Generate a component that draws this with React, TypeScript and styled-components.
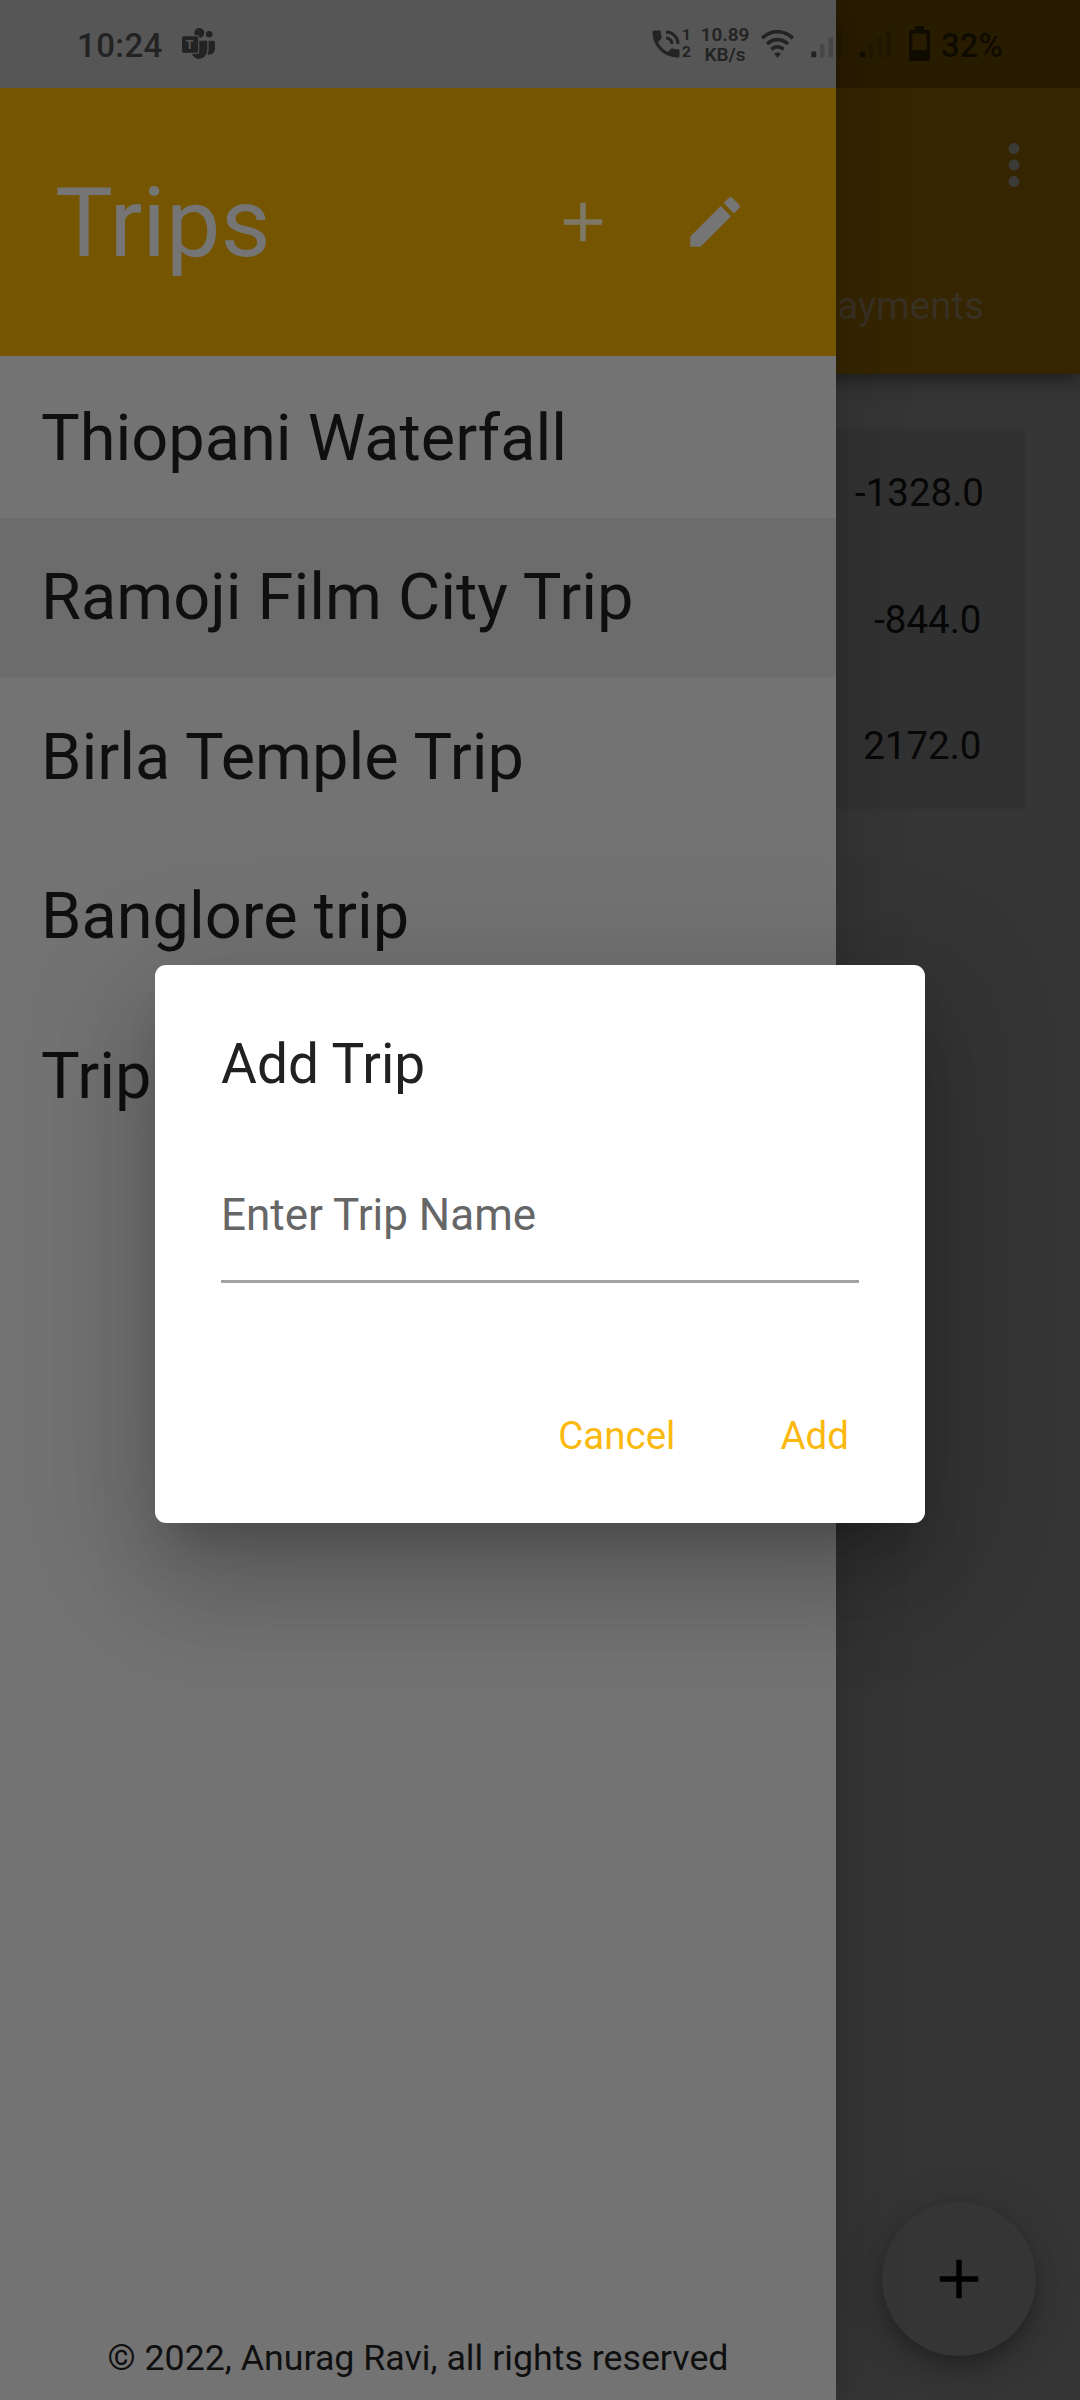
import React from "react";
import styled, { createGlobalStyle } from "styled-components";
import { MdAdd, MdEdit, MdMoreVert, MdPhoneInTalk } from "react-icons/md";

const GlobalStyle = createGlobalStyle`
  *, *::before, *::after { box-sizing: border-box; }
  body { margin: 0; background: #353535; }
  button { font: inherit; border: 0; padding: 0; background: none; }
`;

const Screen = styled.div`
  position: relative;
  width: 1080px;
  height: 2400px;
  overflow: hidden;
  background: #353535;
  font-family: Roboto, "Noto Sans", sans-serif;
`;

/* ---------- trip page, behind the drawer ---------- */

const Page = styled.main`
  display: flex;
  flex-direction: column;
  height: 100%;
`;

const AppBar = styled.header`
  display: flex;
  flex-direction: column;
  height: 374px;
  padding-top: 88px;
  background: #352501;
  box-shadow: 0 6px 11px -3px rgba(0, 0, 0, 0.22), 0 11px 14px rgba(0, 0, 0, 0.14), 0 3px 27px rgba(0, 0, 0, 0.12);
`;

const Toolbar = styled.div`
  display: flex;
  align-items: center;
  justify-content: flex-end;
  height: 154px;
  padding-right: 33px;
  color: #3c3a37;
`;

const TabBar = styled.nav`
  display: flex;
  flex: 1;
  align-items: center;
  justify-content: flex-end;
  padding: 0 96px 5px 0;
`;

const Tab = styled.span`
  font-size: 38.5px;
  line-height: 46px;
  color: #383023;
`;

const Balances = styled.section`
  margin: 55px 55px 0;
  background: #313131;
`;

const Balance = styled.div<{ $inset: number }>`
  display: flex;
  align-items: center;
  justify-content: flex-end;
  height: 126.5px;
  padding: 1px ${(p) => p.$inset}px 0 0;
  font-size: 38.5px;
  color: #070707;
`;

const Fab = styled.button`
  display: flex;
  align-items: center;
  justify-content: center;
  width: 154px;
  height: 154px;
  margin: auto 44px 44px auto;
  border-radius: 50%;
  background: #353535;
  color: #000;
  box-shadow: 0 8px 14px -3px rgba(0, 0, 0, 0.2), 0 16px 27px rgba(0, 0, 0, 0.14), 0 3px 50px rgba(0, 0, 0, 0.12);
`;

/* ---------- drawer ---------- */

const Drawer = styled.aside`
  position: absolute;
  inset: 0 auto 0 0;
  display: flex;
  flex-direction: column;
  width: 836px;
  padding-top: 88px;
  background: #737373;
  box-shadow: 0 22px 28px -14px rgba(0, 0, 0, 0.1), 0 0 66px 6px rgba(0, 0, 0, 0.14);
`;

const DrawerHeader = styled.div`
  display: flex;
  align-items: center;
  height: 267.5px;
  padding: 0 55px;
  background: #755500;
`;

const DrawerTitle = styled.h1`
  flex: 1;
  margin: 3px 0 0;
  font-size: 97.2px;
  font-weight: 400;
  line-height: 112px;
  color: #757575;
`;

const IconButton = styled.button<{ $tone: string }>`
  display: flex;
  align-items: center;
  justify-content: center;
  width: 132px;
  height: 132px;
  color: ${(p) => p.$tone};
`;

const TripList = styled.ul`
  flex: 1;
  margin: 0;
  padding: 2.5px 0 0;
  list-style: none;
`;

const TripRow = styled.li<{ $selected?: boolean }>`
  display: flex;
  align-items: center;
  height: 159.5px;
  padding: 0 0 0 41px;
  font-size: 64.9px;
  color: #0f0f0f;
  background: ${(p) => (p.$selected ? "#6c6c6c" : "transparent")};
`;

const Copyright = styled.footer`
  padding-bottom: 20px;
  text-align: center;
  font-size: 35.75px;
  line-height: 44px;
  color: #0f0f0f;
`;

/* ---------- system status bar ---------- */

const StatusBar = styled.div`
  position: absolute;
  inset: 0 0 auto 0;
  display: flex;
  align-items: center;
  height: 88px;
  padding: 0 0 1px 77px;
  background: rgba(0, 0, 0, 0.25);
  color: #232323;

  > * {
    flex-shrink: 0;
  }
`;

const Clock = styled.span`
  width: 105px;
  font-size: 33px;
  font-weight: 500;
  letter-spacing: 0.4px;
  padding-top: 4px;
`;

const SimDigits = styled.span`
  display: grid;
  width: 10px;
  margin-left: -2px;
  font-size: 15.5px;
  font-weight: 700;
  line-height: 16.5px;
`;

const NetSpeed = styled.span`
  display: grid;
  justify-items: center;
  width: 52px;
  margin: 0 10px 0 7px;
  padding-top: 2px;
  font-size: 19px;
  font-weight: 600;
  line-height: 20px;
`;

const BatteryText = styled.span`
  margin-left: 11px;
  padding-top: 4px;
  font-size: 33px;
  font-weight: 500;
  color: #100b00;
`;

const Spacer = styled.span<{ $w: number }>`
  width: ${(p) => p.$w}px;
`;

/* ---------- dialog ---------- */

const DialogLayer = styled.div`
  position: absolute;
  inset: 88px 0 0 0;
  display: flex;
  align-items: center;
  justify-content: center;
`;

const Dialog = styled.div`
  display: flex;
  flex-direction: column;
  width: 770px;
  height: 558.5px;
  padding: 67px 66px 0;
  border-radius: 11px;
  background: #fff;
  box-shadow: 0 30px 41px -19px rgba(0, 0, 0, 0.2), 0 66px 104px 8px rgba(0, 0, 0, 0.14),
    0 25px 126px 22px rgba(0, 0, 0, 0.12);
`;

const DialogTitle = styled.h2`
  margin: 0;
  font-size: 55px;
  font-weight: 400;
  line-height: 64.5px;
  color: #212121;
`;

const Field = styled.div`
  height: 187px;
  padding-top: 93px;
  border-bottom: 3px solid #a3a3a3;
  font-size: 44px;
  line-height: 52px;
  color: #666;
`;

const Actions = styled.div`
  display: flex;
  justify-content: flex-end;
  gap: 105px;
  margin-top: 130px;
  padding-right: 10px;
`;

const Action = styled.button`
  font-size: 38.5px;
  line-height: 45px;
  color: #fbb90f;
`;

const trips = ["Thiopani Waterfall", "Ramoji Film City Trip", "Birla Temple Trip", "Banglore trip", "Trip"];

const LogoLetter = styled.text`
  font-family: Roboto, sans-serif;
  font-size: 12.5px;
  font-weight: 700;
  text-anchor: middle;
  fill: #565656;
`;

function TeamsLogo() {
  return (
    <svg width="33" height="31" viewBox="0 0 33 31" fill="#232323">
      <circle cx="17.3" cy="5" r="5" />
      <circle cx="27.2" cy="6.2" r="3.3" />
      <path d="M16 12.8h9.3V22a9 9 0 0 1-8.3 9Q11.8 30.6 9.8 25.8H16z" />
      <path d="M26.6 12.8H31.4Q33 12.8 33 14.4V21Q32.6 27 25.3 26.6Q26.6 24.4 26.6 21.6z" />
      <rect x="-1" y="7.2" width="18.3" height="18.6" rx="2" fill="#565656" />
      <rect x="0" y="8.2" width="16.2" height="16.6" rx="1.6" />
      <LogoLetter x="7.6" y="21">T</LogoLetter>
    </svg>
  );
}

function Wifi() {
  return (
    <svg width="33" height="28" viewBox="0 0 33 28" fill="none" stroke="#232323" strokeWidth="3.6">
      <path d="M1.2 8.2C10 -0.4 23 -0.4 31.8 8.2" />
      <path d="M6 14C12.2 8.2 20.8 8.2 27 14" />
      <path d="M10.4 19.4C14.2 15.8 18.8 15.8 22.6 19.4" />
      <path d="M13.2 23.6Q16.5 21.4 19.8 23.6L16.5 28Z" fill="#232323" stroke="none" />
    </svg>
  );
}

function Signal({ tones }: { tones: string[] }) {
  return (
    <svg width="32" height="28" viewBox="0 0 32 28">
      <rect x="0.3" y="21.5" width="5" height="5.8" fill={tones[0]} />
      <rect x="9" y="14.5" width="4.6" height="12.8" fill={tones[1]} />
      <rect x="17.5" y="7.3" width="4.6" height="20" fill={tones[2]} />
      <rect x="26" y="0.3" width="4.6" height="27" fill={tones[3]} />
    </svg>
  );
}

function Battery() {
  return (
    <svg width="21" height="35" viewBox="0 0 21 35">
      <path
        fill="#100b00"
        fillRule="evenodd"
        d="M6 0h9v4h4a2 2 0 0 1 2 2v27a2 2 0 0 1-2 2H2a2 2 0 0 1-2-2V6a2 2 0 0 1 2-2h4zM3.3 7.6V24h14.4V7.6z"
      />
    </svg>
  );
}

export default function App() {
  return (
    <Screen>
      <GlobalStyle />
      <Page>
        <AppBar>
          <Toolbar>
            <MdMoreVert size={66} />
          </Toolbar>
          <TabBar>
            <Tab>Payments</Tab>
          </TabBar>
        </AppBar>
        <Balances>
          <Balance $inset={41}>-1328.0</Balance>
          <Balance $inset={43.5}>-844.0</Balance>
          <Balance $inset={43.5}>2172.0</Balance>
        </Balances>
        <Fab>
          <MdAdd size={66} />
        </Fab>
      </Page>

      <Drawer>
        <DrawerHeader>
          <DrawerTitle>Trips</DrawerTitle>
          <IconButton $tone="#7d7966">
            <MdAdd size={66} />
          </IconButton>
          <IconButton $tone="#757575">
            <MdEdit size={66} />
          </IconButton>
        </DrawerHeader>
        <TripList>
          {trips.map((trip, i) => (
            <TripRow key={trip} $selected={i === 1}>
              {trip}
            </TripRow>
          ))}
        </TripList>
        <Copyright>© 2022, Anurag Ravi, all rights reserved</Copyright>
      </Drawer>

      <StatusBar>
        <Clock>10:24</Clock>
        <TeamsLogo />
        <Spacer $w={433} />
        <MdPhoneInTalk size={36} />
        <SimDigits>
          <span>1</span>
          <span>2</span>
        </SimDigits>
        <NetSpeed>
          <span>10.89</span>
          <span>KB/s</span>
        </NetSpeed>
        <Wifi />
        <Spacer $w={17} />
        <Signal tones={["#232323", "#464646", "#464646", "#1f1600"]} />
        <Spacer $w={17} />
        <Signal tones={["#100b00", "#201700", "#201700", "#201700"]} />
        <Spacer $w={17} />
        <Battery />
        <BatteryText>32%</BatteryText>
      </StatusBar>

      <DialogLayer>
        <Dialog>
          <DialogTitle>Add Trip</DialogTitle>
          <Field>Enter Trip Name</Field>
          <Actions>
            <Action>Cancel</Action>
            <Action>Add</Action>
          </Actions>
        </Dialog>
      </DialogLayer>
    </Screen>
  );
}
